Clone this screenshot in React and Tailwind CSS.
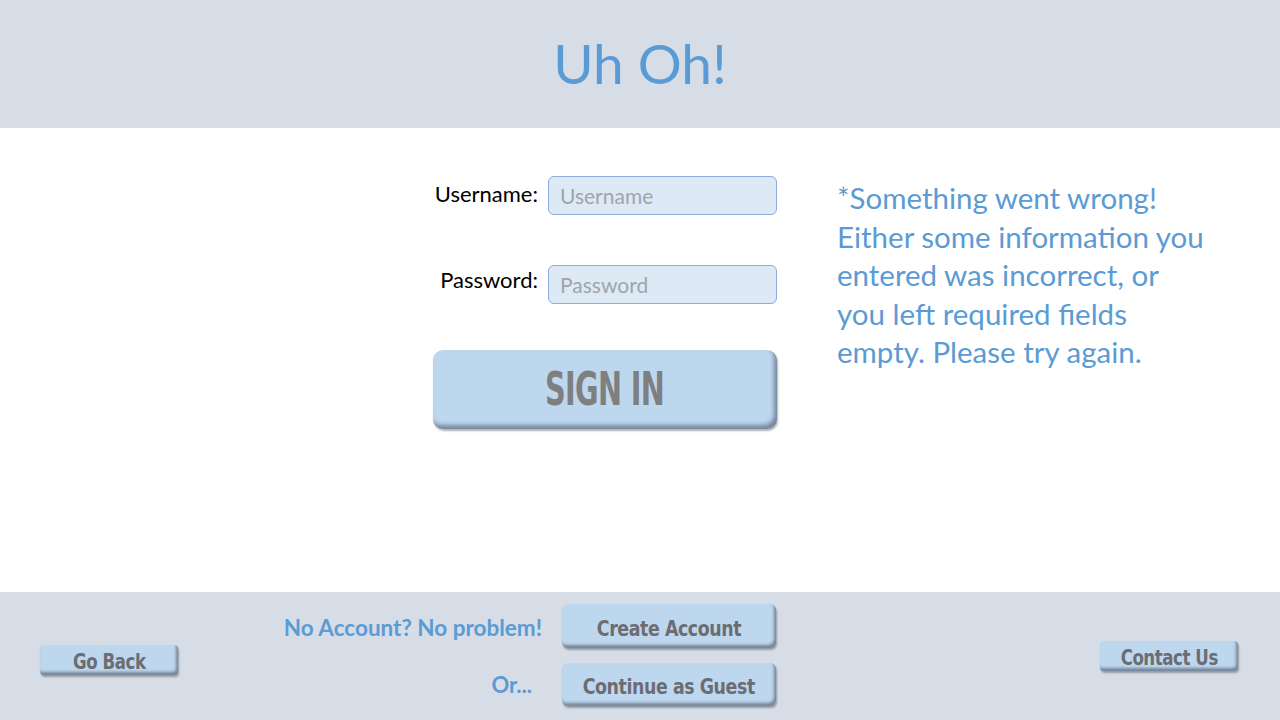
import React from "react";

const BODY = { fontFamily: "Lato, 'Open Sans', sans-serif" };

const bevel =
  "bg-[#bdd7ee] shadow-[inset_-2px_-3px_3px_rgba(70,80,100,0.6),1px_2px_2px_rgba(0,0,0,0.3)] text-[#6c6c72] font-bold [font-family:'DejaVu_Sans_Condensed',sans-serif]";

const SmallButton = ({ label, className }) => (
  <button
    className={`${bevel} rounded-[4px] flex items-center justify-center tracking-[-0.5px] ${className}`}
  >
    <span className="inline-block scale-x-[0.88]">{label}</span>
  </button>
);

const Field = ({ label, placeholder, labelClass = "" }) => (
  <div className="flex items-center">
    <label className={`w-[116px] pr-[10px] text-right text-[22px] text-black whitespace-nowrap ${labelClass}`}>
      {label}
    </label>
    <input
      placeholder={placeholder}
      className="w-[229px] h-[39px] rounded-[6px] border border-[#8faadc] bg-[#dee9f6] px-[11px] text-[21px] placeholder:text-[#a0a4ab] outline-none"
      style={BODY}
    />
  </div>
);

export default function App() {
  return (
    <div className="w-[1280px] h-[720px] flex flex-col bg-white" style={BODY}>
      {/* Header */}
      <header className="h-[128px] bg-[#d6dde6] flex items-center justify-center">
        <h1 className="text-[55px] text-[#5b9bd5] leading-none pb-[2px]">Uh Oh!</h1>
      </header>

      {/* Main */}
      <main className="h-[464px] flex pt-[48px]">
        <div className="ml-[432px] w-[345px] flex flex-col">
          <Field label="Username:" placeholder="Username" labelClass="-translate-y-[2px]" />
          <div className="mt-[50px]">
            <Field label="Password:" placeholder="Password" labelClass="-translate-y-[5px]" />
          </div>
          <button className="mt-[46px] ml-[1px] w-[344px] h-[79px] rounded-[10px] bg-[#bdd7ee] shadow-[inset_-3px_-4px_4px_rgba(70,80,100,0.6),1px_2px_2px_rgba(0,0,0,0.3)] flex items-center justify-center text-[#7f7f7f] font-bold text-[47px] [font-family:'DejaVu_Sans_Condensed',sans-serif]">
            <span className="inline-block scale-x-[0.68] tracking-[-1px]">SIGN IN</span>
          </button>
        </div>
        <div className="ml-[60px] pt-[3px] text-[29.5px] leading-[38.5px] text-[#5b9bd5]">
          *Something went wrong!
          <br />
          Either some information you
          <br />
          entered was incorrect, or
          <br />
          you left required fields
          <br />
          empty. Please try again.
        </div>
      </main>

      {/* Footer */}
      <footer className="h-[128px] bg-[#d6dde6] flex items-start">
        <SmallButton label="Go Back" className="mt-[53px] ml-[40px] w-[138px] h-[30px] text-[21px] pt-[5px]" />
        <div className="mt-[12px] grid grid-cols-[364px_214px] gap-x-[20px] gap-y-[15px] items-center">
          <span className="text-right text-[22.5px] font-bold text-[#5b9bd5] whitespace-nowrap pt-[3px]">
            No Account? No problem!
          </span>
          <SmallButton label="Create Account" className="h-[44px] !rounded-[6px] text-[22px] pt-[4px]" />
          <span className="text-right pr-[10px] text-[22px] font-bold text-[#5b9bd5]">
            Or...
          </span>
          <SmallButton label="Continue as Guest" className="h-[43px] !rounded-[6px] text-[22px] pt-[4px]" />
        </div>
        <SmallButton label="Contact Us" className="ml-auto mr-[42px] mt-[49px] w-[138px] h-[30px] text-[21px] pt-[5px]" />
      </footer>
    </div>
  );
}
